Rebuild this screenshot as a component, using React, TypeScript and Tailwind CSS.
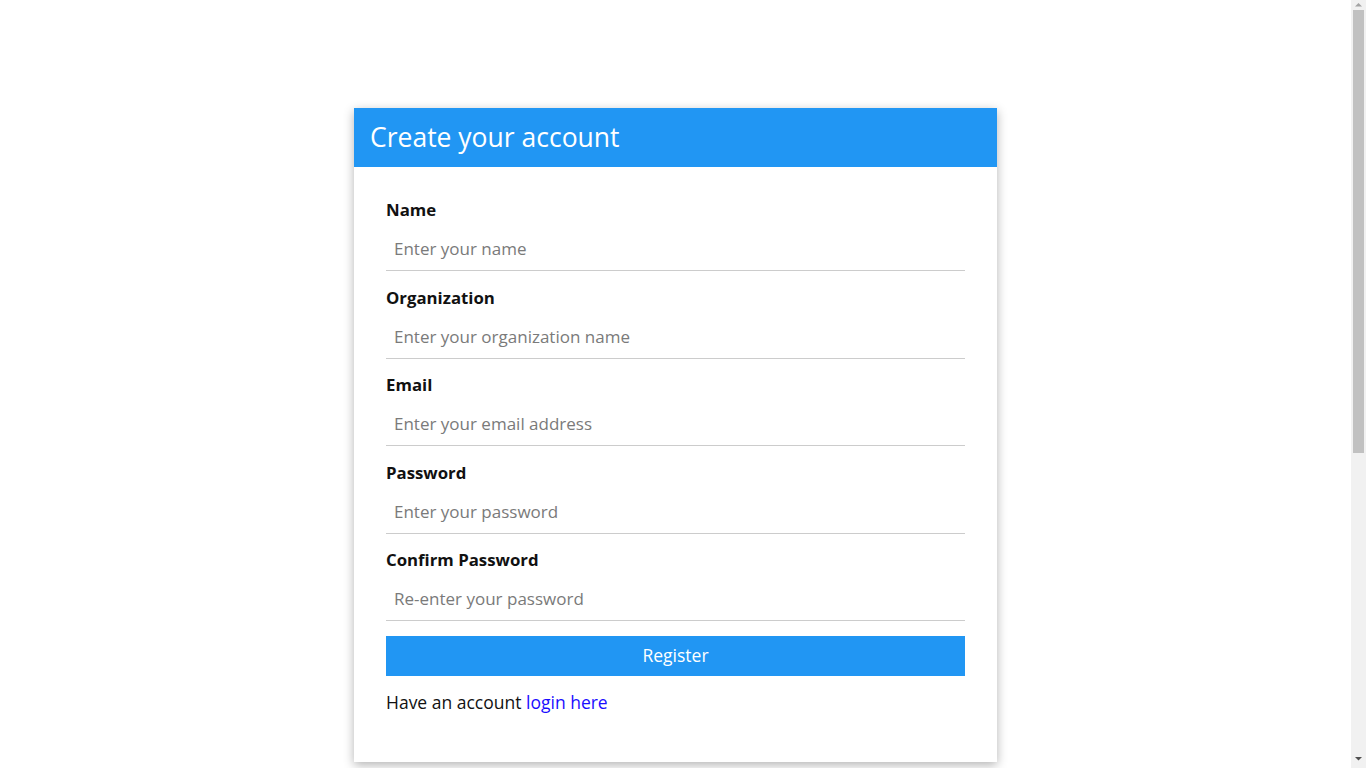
import React from 'react'

const FIELDS = [
  { label: 'Name', type: 'text', placeholder: 'Enter your name' },
  { label: 'Organization', type: 'text', placeholder: 'Enter your organization name' },
  { label: 'Email', type: 'email', placeholder: 'Enter your email address' },
  { label: 'Password', type: 'password', placeholder: 'Enter your password' },
  { label: 'Confirm Password', type: 'password', placeholder: 'Re-enter your password' },
]

// Fake browser scrollbar, the reference page is taller than the viewport
function Scrollbar() {
  return (
    <div className="flex h-full w-[15px] shrink-0 flex-col items-center bg-[#f1f1f1]">
      <svg width="15" height="10" viewBox="0 0 15 10" className="shrink-0">
        <path d="M4 6.5 L7.5 3 L11 6.5 Z" fill="#a3a3a3" />
      </svg>
      <div className="h-[443px] w-[11px] shrink-0 bg-[#c1c1c1]" />
      <div className="flex-1" />
      <svg width="15" height="17" viewBox="0 0 15 17" className="shrink-0">
        <path d="M4 6 L11 6 L7.5 9.5 Z" fill="#505050" />
      </svg>
    </div>
  )
}

export default function App() {
  return (
    <div
      className="flex h-screen overflow-hidden bg-white"
      style={{ fontFamily: '"Open Sans", "Liberation Sans", sans-serif' }}
    >
      <main className="flex-1 pt-[108px]">
        <div className="mx-auto w-[643px] bg-white shadow-[0_3px_10px_rgba(0,0,0,0.3)]">
          {/* Header */}
          <div className="flex h-[59px] items-center bg-[#2196f3] px-4">
            <h1 className="text-[26.5px] font-normal text-white">Create your account</h1>
          </div>

          {/* Form */}
          <form className="px-8 pt-[31px] pb-[48px]" onSubmit={(e) => e.preventDefault()}>
            {FIELDS.map((f) => (
              <div key={f.label} className="mb-[14.5px]">
                <label className="block h-6 text-[16.8px] leading-6 font-bold text-[#111]">
                  {f.label}
                </label>
                <input
                  type={f.type}
                  placeholder={f.placeholder}
                  className="mt-2 block h-[41px] w-full border-b border-[#cccccc] px-2 pb-[3px] text-[17px] text-[#333] placeholder-[#7a7a7a] outline-none"
                />
              </div>
            ))}

            <button
              type="submit"
              className="block h-10 w-full bg-[#2196f3] text-[17.5px] text-white"
            >
              Register
            </button>

            <p className="mt-[14px] text-[17.5px] leading-6 text-[#111]">
              Have an account{' '}
              <a href="#" className="text-[#1a0dff]">
                login here
              </a>
            </p>
          </form>
        </div>
      </main>
      <Scrollbar />
    </div>
  )
}
